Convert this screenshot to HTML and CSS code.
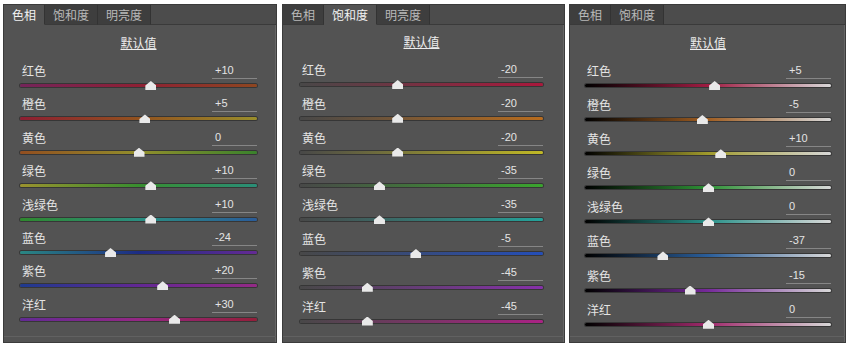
FILE: index.html
```html
<!DOCTYPE html>
<html lang="zh-CN">
<head>
    <meta charset="UTF-8">
    <title>HSL</title>
    <link rel="stylesheet" href="styles.css">
</head>
<body>
    <div class="panels">

        <section class="panel panel-hue">
            <div class="tabs">
                <span class="tab active">色相</span><span class="tab">饱和度</span><span class="tab">明亮度</span><span class="tab-fill"></span>
            </div>
            <div class="content">
                <div class="default"><span>默认值</span></div>
                <div class="row"><div class="head"><span class="label">红色</span><span class="value">+10</span></div><div class="track h-red"><span class="thumb" style="left:55%"></span></div></div>
                <div class="row"><div class="head"><span class="label">橙色</span><span class="value">+5</span></div><div class="track h-orange"><span class="thumb" style="left:52.5%"></span></div></div>
                <div class="row"><div class="head"><span class="label">黄色</span><span class="value">0</span></div><div class="track h-yellow"><span class="thumb" style="left:50%"></span></div></div>
                <div class="row"><div class="head"><span class="label">绿色</span><span class="value">+10</span></div><div class="track h-green"><span class="thumb" style="left:55%"></span></div></div>
                <div class="row"><div class="head"><span class="label">浅绿色</span><span class="value">+10</span></div><div class="track h-aqua"><span class="thumb" style="left:55%"></span></div></div>
                <div class="row"><div class="head"><span class="label">蓝色</span><span class="value">-24</span></div><div class="track h-blue"><span class="thumb" style="left:38%"></span></div></div>
                <div class="row"><div class="head"><span class="label">紫色</span><span class="value">+20</span></div><div class="track h-purple"><span class="thumb" style="left:60%"></span></div></div>
                <div class="row"><div class="head"><span class="label">洋红</span><span class="value">+30</span></div><div class="track h-magenta"><span class="thumb" style="left:65%"></span></div></div>
            </div>
        </section>

        <section class="panel panel-sat">
            <div class="tabs">
                <span class="tab">色相</span><span class="tab active">饱和度</span><span class="tab">明亮度</span><span class="tab-fill"></span>
            </div>
            <div class="content">
                <div class="default"><span>默认值</span></div>
                <div class="row"><div class="head"><span class="label">红色</span><span class="value">-20</span></div><div class="track s-red"><span class="thumb" style="left:40%"></span></div></div>
                <div class="row"><div class="head"><span class="label">橙色</span><span class="value">-20</span></div><div class="track s-orange"><span class="thumb" style="left:40%"></span></div></div>
                <div class="row"><div class="head"><span class="label">黄色</span><span class="value">-20</span></div><div class="track s-yellow"><span class="thumb" style="left:40%"></span></div></div>
                <div class="row"><div class="head"><span class="label">绿色</span><span class="value">-35</span></div><div class="track s-green"><span class="thumb" style="left:32.5%"></span></div></div>
                <div class="row"><div class="head"><span class="label">浅绿色</span><span class="value">-35</span></div><div class="track s-aqua"><span class="thumb" style="left:32.5%"></span></div></div>
                <div class="row"><div class="head"><span class="label">蓝色</span><span class="value">-5</span></div><div class="track s-blue"><span class="thumb" style="left:47.5%"></span></div></div>
                <div class="row"><div class="head"><span class="label">紫色</span><span class="value">-45</span></div><div class="track s-purple"><span class="thumb" style="left:27.5%"></span></div></div>
                <div class="row"><div class="head"><span class="label">洋红</span><span class="value">-45</span></div><div class="track s-magenta"><span class="thumb" style="left:27.5%"></span></div></div>
            </div>
        </section>

        <section class="panel panel-lum">
            <div class="tabs">
                <span class="tab">色相</span><span class="tab">饱和度</span><span class="tab-fill"></span>
            </div>
            <div class="content">
                <div class="default"><span>默认值</span></div>
                <div class="row"><div class="head"><span class="label">红色</span><span class="value">+5</span></div><div class="track l-red"><span class="thumb" style="left:52.5%"></span></div></div>
                <div class="row"><div class="head"><span class="label">橙色</span><span class="value">-5</span></div><div class="track l-orange"><span class="thumb" style="left:47.5%"></span></div></div>
                <div class="row"><div class="head"><span class="label">黄色</span><span class="value">+10</span></div><div class="track l-yellow"><span class="thumb" style="left:55%"></span></div></div>
                <div class="row"><div class="head"><span class="label">绿色</span><span class="value">0</span></div><div class="track l-green"><span class="thumb" style="left:50%"></span></div></div>
                <div class="row"><div class="head"><span class="label">浅绿色</span><span class="value">0</span></div><div class="track l-aqua"><span class="thumb" style="left:50%"></span></div></div>
                <div class="row"><div class="head"><span class="label">蓝色</span><span class="value">-37</span></div><div class="track l-blue"><span class="thumb" style="left:31.5%"></span></div></div>
                <div class="row"><div class="head"><span class="label">紫色</span><span class="value">-15</span></div><div class="track l-purple"><span class="thumb" style="left:42.5%"></span></div></div>
                <div class="row"><div class="head"><span class="label">洋红</span><span class="value">0</span></div><div class="track l-magenta"><span class="thumb" style="left:50%"></span></div></div>
            </div>
        </section>

    </div>
</body>
</html>
```

FILE: styles.css
```css
body {
    margin: 0;
    background: #fff;
    font-family: "Noto Sans CJK SC", "Liberation Sans", sans-serif;
    color: #e4e4e4;
}

.panels {
    display: flex;
    align-items: flex-start;
    gap: 5px;
    padding: 4px 0 0 3px;
}

.panel {
    height: 339px;
    box-sizing: border-box;
    background: #535353;
    border: 1px solid #3b3b3b;
    box-shadow: inset -1px 0 0 #666;
    display: flex;
    flex-direction: column;
}

.panel-hue { width: 274px; }
.panel-sat { width: 283px; margin-right: -1px; }
.panel-lum { width: 277px; }

/* tabs */
.tabs {
    display: flex;
    height: 20px;
    flex: none;
}

.tab {
    padding: 0 8px;
    font-size: 12px;
    line-height: 20px;
    background: #3e3e3e;
    color: #b9b9b9;
    border-right: 1px solid #333;
    border-bottom: 1px solid #3a3a3a;
    box-sizing: border-box;
}

.tab.active {
    background: #535353;
    color: #f2f2f2;
    border-bottom-color: #535353;
}

.tab-fill {
    flex: 1;
    background: #4c4c4c;
    border-bottom: 1px solid #3a3a3a;
}

/* content */
.content {
    flex: 1;
    display: flex;
    flex-direction: column;
    border-bottom: 1px solid #616161;
    margin-bottom: 5px;
}

.panel-hue .content { padding: 0 19px 0 16px; }
.panel-sat .content { padding: 0 21px 0 17px; }
.panel-lum .content { padding: 0 14px 0 15px; }

.default {
    text-align: center;
    font-size: 12px;
    line-height: 18px;
    margin: 9px 0 11px;
}

.default span {
    text-decoration: underline;
    color: #ececec;
}

.panel-sat .default { margin: 8px 0 11px; }

.row {
    flex: none;
}

.panel-hue .row { height: 33.4px; }
.panel-sat .row { height: 33.8px; }
.panel-lum .row { height: 34.1px; }

.head {
    display: flex;
    justify-content: space-between;
    align-items: flex-end;
    height: 16px;
}

.label {
    font-size: 12px;
    line-height: 16px;
    padding-left: 2px;
}

.value {
    width: 45px;
    height: 16px;
    box-sizing: border-box;
    padding-left: 3px;
    font-family: "Liberation Sans", sans-serif;
    font-size: 11px;
    line-height: 14px;
    border-bottom: 1px solid #868686;
}

/* slider */
.track {
    position: relative;
    height: 3px;
    margin-top: 5px;
    border-radius: 2px;
    box-shadow: 0 0 0 1px rgba(20, 20, 20, 0.45);
}

.thumb {
    position: absolute;
    top: -3px;
    width: 11px;
    height: 9px;
    margin-left: -5px;
    background: #e9e9e9;
    clip-path: polygon(50% 0, 100% 50%, 100% 100%, 0 100%, 0 50%);
}

/* hue */
.h-red { background: linear-gradient(90deg, #74245a, #8e2034 50%, #8e4620); }
.h-orange { background: linear-gradient(90deg, #8e1e32, #92521f 50%, #9a8e2c); }
.h-yellow { background: linear-gradient(90deg, #924e20, #928e2c 50%, #3a822c); }
.h-green { background: linear-gradient(90deg, #9a922e, #388e2f 50%, #2a8e78); }
.h-aqua { background: linear-gradient(90deg, #2f882d, #2a8e80 50%, #2a5c9a); }
.h-blue { background: linear-gradient(90deg, #2a8682, #1c2c84 50%, #642a94); }
.h-purple { background: linear-gradient(90deg, #1e3a8e, #622894 50%, #942a86); }
.h-magenta { background: linear-gradient(90deg, #622a94, #942884 50%, #941e3a); }

/* saturation */
.s-red { background: linear-gradient(90deg, #484848, #aa183c); }
.s-orange { background: linear-gradient(90deg, #484848, #b86c1e); }
.s-yellow { background: linear-gradient(90deg, #484848, #c0b826); }
.s-green { background: linear-gradient(90deg, #484848, #3aa42e); }
.s-aqua { background: linear-gradient(90deg, #484848, #24a29a); }
.s-blue { background: linear-gradient(90deg, #484848, #244eb8); }
.s-purple { background: linear-gradient(90deg, #484848, #8630aa); }
.s-magenta { background: linear-gradient(90deg, #484848, #aa2284); }

/* luminance */
.l-red { background: linear-gradient(90deg, #000, #a01c42 50%, #d8d8d8); }
.l-orange { background: linear-gradient(90deg, #000, #a05e22 50%, #d8d8d8); }
.l-yellow { background: linear-gradient(90deg, #000, #a09a2c 50%, #d8d8d8); }
.l-green { background: linear-gradient(90deg, #000, #2e9236 50%, #d8d8d8); }
.l-aqua { background: linear-gradient(90deg, #000, #2a928a 50%, #d8d8d8); }
.l-blue { background: linear-gradient(90deg, #000, #2a5e9a 50%, #d8d8d8); }
.l-purple { background: linear-gradient(90deg, #000, #762a9a 50%, #d8d8d8); }
.l-magenta { background: linear-gradient(90deg, #000, #a02a6c 50%, #d8d8d8); }
```
